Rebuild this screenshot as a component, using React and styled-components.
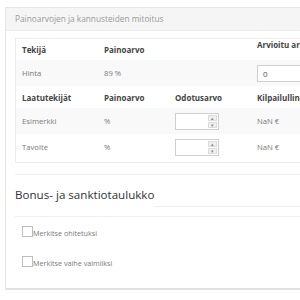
import React from "react";
import styled, { createGlobalStyle } from "styled-components";

const GlobalStyle = createGlobalStyle`
  html, body {
    margin: 0;
    padding: 0;
    background: #ffffff;
    overflow: hidden;
  }
  body {
    font-family: "Open Sans", "Noto Sans", sans-serif;
  }
`;

export default function App() {
  const quality = [
    { name: "Esimerkki", weight: "%", result: "NaN €", striped: true },
    { name: "Tavoite", weight: "%", result: "NaN €", striped: false },
  ];

  return (
    <>
      <GlobalStyle />
      <Page>
        <Card>
          <CardHeader>Painoarvojen ja kannusteiden mitoitus</CardHeader>
          <CardBody>
            <TableBox>
              <Table>
                <colgroup>
                  <col style={{ width: 88 }} />
                  <col style={{ width: 71 }} />
                  <col style={{ width: 82 }} />
                  <col />
                </colgroup>
                <tbody>
                  <Row height={21}>
                    <Head>Tekijä</Head>
                    <Head>Painoarvo</Head>
                    <Head />
                    <Head top>Arvioitu arvo (€)</Head>
                  </Row>
                  <Row height={26} striped>
                    <Cell>Hinta</Cell>
                    <Cell>89 %</Cell>
                    <Cell />
                    <Cell>
                      <TextInput>0</TextInput>
                    </Cell>
                  </Row>
                  <Row height={22}>
                    <Head>Laatutekijät</Head>
                    <Head>Painoarvo</Head>
                    <Head>Odotusarvo</Head>
                    <Head>Kilpailullinen arvo</Head>
                  </Row>
                  {quality.map((q) => (
                    <Row key={q.name} height={26} striped={q.striped}>
                      <Cell>{q.name}</Cell>
                      <Cell>{q.weight}</Cell>
                      <Cell>
                        <Spinner>
                          <SpinField />
                          <SpinButtons>
                            <SpinBtn>▴</SpinBtn>
                            <SpinBtn>▾</SpinBtn>
                          </SpinButtons>
                        </Spinner>
                      </Cell>
                      <Cell>{q.result}</Cell>
                    </Row>
                  ))}
                </tbody>
              </Table>
            </TableBox>
            <Divider />
            <HeadingRow>
              <Title>Bonus- ja sanktiotaulukko</Title>
              <Rule />
            </HeadingRow>
            <Section>
              <CheckRow>
                <Box />
                <CheckLabel>Merkitse ohitetuksi</CheckLabel>
              </CheckRow>
              <CheckRow>
                <Box />
                <CheckLabel>Merkitse vaihe valmiiksi</CheckLabel>
              </CheckRow>
            </Section>
          </CardBody>
        </Card>
      </Page>
    </>
  );
}

const Page = styled.div`
  padding: 7px 0 0 5px;
  width: 420px;
`;

const Card = styled.div`
  border: 1px solid #e6e6e6;
  border-bottom: 2px solid #e2e2e2;
  background: #fff;
  height: 283px;
  box-sizing: border-box;
`;

const CardHeader = styled.div`
  height: 22px;
  line-height: 21px;
  padding-left: 9px;
  background: #f5f5f5;
  border-bottom: 1px solid #ececec;
  font-size: 8.3px;
  color: #9a9a9a;
`;

const CardBody = styled.div`
  padding: 7px 9px 0 9px;
`;

const TableBox = styled.div`
  border: 1px solid #ececec;
  padding-bottom: 2px;
`;

const Table = styled.table`
  width: 100%;
  border-collapse: collapse;
  table-layout: fixed;
`;

const Row = styled.tr`
  height: ${(p) => p.height}px;
  background: ${(p) => (p.striped ? "#f9f9f9" : "transparent")};
`;

const Head = styled.td`
  font-size: 8px;
  font-weight: 700;
  color: #444;
  padding: 0;
  vertical-align: ${(p) => (p.top ? "top" : "middle")};
  white-space: nowrap;
  overflow: hidden;
  &:first-child {
    padding-left: 6px;
  }
`;

const Cell = styled.td`
  font-size: 7.7px;
  color: #7a7a7a;
  padding: 0;
  vertical-align: middle;
  white-space: nowrap;
  &:first-child {
    padding-left: 6px;
  }
`;

const TextInput = styled.div`
  height: 17px;
  width: 60px;
  box-sizing: border-box;
  border: 1px solid #cfcfcf;
  background: #fff;
  font-size: 8px;
  color: #555;
  line-height: 15px;
  padding-left: 5px;
`;

const Spinner = styled.div`
  display: flex;
  width: 44px;
  height: 17px;
  box-sizing: border-box;
  border: 1px solid #cfcfcf;
  background: #fff;
`;

const SpinField = styled.div`
  flex: 1;
`;

const SpinButtons = styled.div`
  display: flex;
  flex-direction: column;
  width: 9px;
  margin: 1px 1px 1px 0;
  gap: 1px;
`;

const SpinBtn = styled.div`
  flex: 1;
  background: #f0f0f0;
  border: 1px solid #dcdcdc;
  font-size: 5px;
  line-height: 5px;
  color: #888;
  text-align: center;
  overflow: hidden;
`;

const Divider = styled.div`
  margin-top: 11px;
  border-top: 1px solid #efefef;
`;

const HeadingRow = styled.div`
  display: flex;
  align-items: flex-end;
  height: 32px;
`;

const Title = styled.h3`
  margin: 0;
  font-size: 11.6px;
  font-weight: 400;
  color: #333;
  line-height: 22px;
  margin-bottom: 1px;
  white-space: nowrap;
`;

const Rule = styled.div`
  flex: 1;
  border-bottom: 1px solid #f0f0f0;
`;

const Section = styled.div`
  margin-top: 9px;
  border-top: 1px solid #efefef;
  padding: 10px 0 0 7px;
  display: flex;
  flex-direction: column;
  gap: 20px;
`;

const CheckRow = styled.div`
  display: flex;
  align-items: flex-end;
  height: 10px;
`;

const Box = styled.span`
  width: 9px;
  height: 9px;
  border: 1px solid #bdbdbd;
  background: #fff;
`;

const CheckLabel = styled.span`
  font-size: 7.2px;
  color: #7a7a7a;
  line-height: 8px;
`;
